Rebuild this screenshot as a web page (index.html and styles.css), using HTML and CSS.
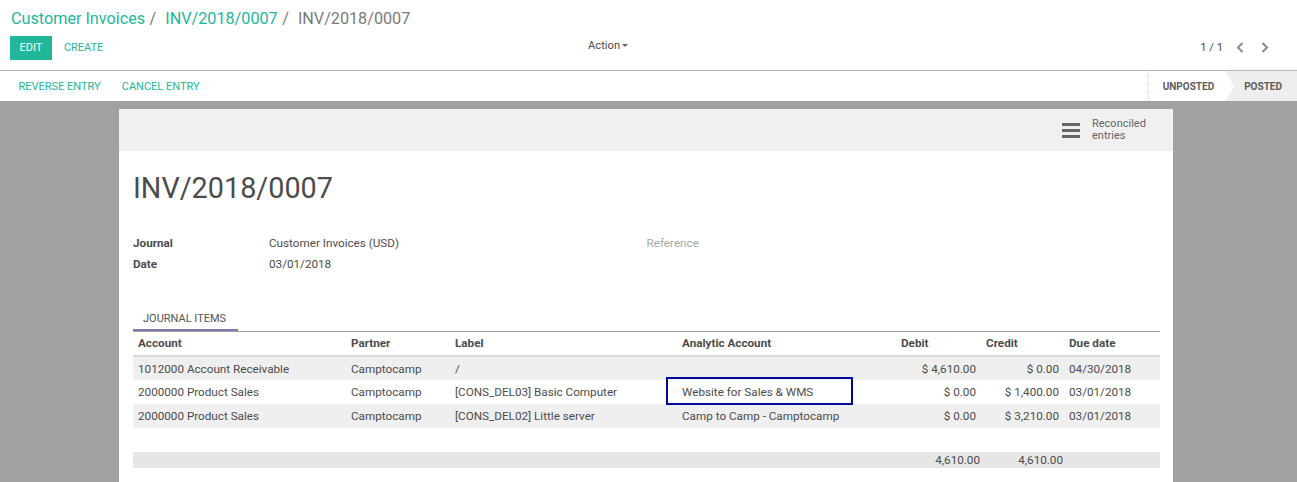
FILE: index.html
```html
<!DOCTYPE html>
<html>
<head>
<meta charset="utf-8">
<link rel="stylesheet" href="styles.css">
</head>
<body>
<div class="control-panel">
  <ol class="breadcrumb">
    <li class="crumb link">Customer Invoices</li>
    <li class="sep">/</li>
    <li class="crumb link">INV/2018/0007</li>
    <li class="sep">/</li>
    <li class="crumb active">INV/2018/0007</li>
  </ol>
  <div class="cp-row">
    <div class="cp-buttons">
      <button class="btn btn-primary">EDIT</button>
      <button class="btn btn-link">CREATE</button>
    </div>
    <div class="cp-sidebar">
      <span class="dropdown">Action<span class="caret"></span></span>
    </div>
    <div class="cp-pager">
      <span class="pager-value">1 / 1</span>
      <span class="pager-btn"><svg width="8" height="11" viewBox="0 0 8 11"><path d="M6.5 1 L2 5.5 L6.5 10" fill="none" stroke="#8a8a8a" stroke-width="2"/></svg></span>
      <span class="pager-btn"><svg width="8" height="11" viewBox="0 0 8 11"><path d="M1.5 1 L6 5.5 L1.5 10" fill="none" stroke="#8a8a8a" stroke-width="2"/></svg></span>
    </div>
  </div>
</div>

<div class="form-view">
  <div class="statusbar">
    <div class="status-actions">
      <button class="btn btn-link small">REVERSE ENTRY</button>
      <button class="btn btn-link small">CANCEL ENTRY</button>
    </div>
    <div class="status-steps">
      <span class="step">UNPOSTED</span>
      <span class="step current">POSTED</span>
    </div>
  </div>

  <div class="form-bg">
    <div class="sheet">
      <div class="button-box">
        <button class="stat-button">
          <span class="hamburger"><i></i><i></i><i></i></span>
          <span class="stat-text">Reconciled<br>entries</span>
        </button>
      </div>
      <div class="sheet-body">
        <h1 class="title">INV/2018/0007</h1>
        <div class="groups">
          <table class="group">
            <tr><td class="label">Journal</td><td class="value">Customer Invoices (USD)</td></tr>
            <tr><td class="label">Date</td><td class="value">03/01/2018</td></tr>
          </table>
          <table class="group">
            <tr><td class="label empty">Reference</td><td class="value"></td></tr>
          </table>
        </div>

        <div class="notebook">
          <ul class="tabs">
            <li class="tab active">JOURNAL ITEMS</li>
          </ul>
          <table class="list">
            <colgroup>
              <col class="c-account"><col class="c-partner"><col class="c-label"><col class="c-analytic"><col class="c-debit"><col class="c-credit"><col class="c-due">
            </colgroup>
            <thead>
              <tr><th>Account</th><th>Partner</th><th>Label</th><th>Analytic Account</th><th>Debit</th><th>Credit</th><th>Due date</th></tr>
            </thead>
            <tbody>
              <tr class="odd"><td>1012000 Account Receivable</td><td>Camptocamp</td><td>/</td><td></td><td class="num">$ 4,610.00</td><td class="num">$ 0.00</td><td>04/30/2018</td></tr>
              <tr><td>2000000 Product Sales</td><td>Camptocamp</td><td>[CONS_DEL03] Basic Computer</td><td class="marked">Website for Sales &amp; WMS<span class="highlight"></span></td><td class="num">$ 0.00</td><td class="num">$ 1,400.00</td><td>03/01/2018</td></tr>
              <tr class="odd"><td>2000000 Product Sales</td><td>Camptocamp</td><td>[CONS_DEL02] Little server</td><td>Camp to Camp - Camptocamp</td><td class="num">$ 0.00</td><td class="num">$ 3,210.00</td><td>03/01/2018</td></tr>
              <tr class="filler"><td></td><td></td><td></td><td></td><td></td><td></td><td></td></tr>
            </tbody>
            <tfoot>
              <tr><td></td><td></td><td></td><td></td><td class="num total">4,610.00</td><td class="num total">4,610.00</td><td></td></tr>
            </tfoot>
          </table>
        </div>
      </div>
    </div>
  </div>
</div>
</body>
</html>
```

FILE: styles.css
```css
* { box-sizing: border-box; }
html, body {
  margin: 0;
  padding: 0;
  height: 482px;
  overflow: hidden;
  background: #ffffff;
  font-family: Roboto, "Liberation Sans", sans-serif;
  color: #4c4c4c;
  font-size: 11.7px;
}
button {
  font-family: inherit;
  border: 0;
  background: none;
  cursor: pointer;
  margin: 0;
}

/* control panel */
.control-panel {
  height: 71px;
  border-bottom: 1px solid #b9b9b9;
  padding-top: 8px;
}
.breadcrumb {
  list-style: none;
  margin: 0;
  padding: 0 0 0 11px;
  display: flex;
  align-items: center;
  height: 22px;
  font-size: 16.2px;
  line-height: 22px;
}
.breadcrumb .crumb.link { color: #21b799; }
.breadcrumb .crumb.active { color: #7a7a7a; }
.breadcrumb .sep { color: #7a7a7a; padding: 0 9px 0 4.5px; }
.cp-row {
  display: grid;
  grid-template-columns: 578px auto 1fr;
  align-items: center;
  margin-top: 6px;
  height: 24px;
}
.cp-buttons { display: flex; align-items: center; padding-left: 10px; }
.btn {
  height: 24px;
  font-size: 11px;
  line-height: 24px;
  padding: 0 12px;
}
.btn-primary {
  background: #21b799;
  color: #fff;
  padding: 0 9.5px;
}
.btn-link { color: #21b799; }
.cp-sidebar {
  padding-left: 10px;
  padding-bottom: 6px;
  font-size: 11.2px;
  color: #4c4c4c;
}
.caret {
  display: inline-block;
  margin-left: 2px;
  vertical-align: middle;
  border-top: 3.5px solid #666;
  border-left: 3.5px solid transparent;
  border-right: 3.5px solid transparent;
}
.cp-pager {
  justify-self: end;
  display: flex;
  align-items: center;
  padding-right: 20px;
  padding-bottom: 2px;
  font-size: 11.2px;
}
.pager-value { margin-right: 4px; }
.pager-btn { display: inline-flex; width: 25px; justify-content: center; }

/* status bar */
.statusbar {
  height: 30px;
  display: flex;
  justify-content: space-between;
  align-items: stretch;
}
.status-actions { display: flex; align-items: center; padding-left: 8px; padding-top: 1px; }
.btn.small { padding: 0 10.5px; font-size: 11px; }
.status-steps {
  display: flex;
  align-items: stretch;
  border-left: 1px dotted #d4d0e6;
}
.step {
  display: flex;
  align-items: center;
  font-size: 10px;
  font-weight: bold;
  color: #5c5c5c;
  padding-top: 1px;
}
.step:first-child { padding-left: 14px; padding-right: 11px; }
.step.current {
  background: #eeeeef;
  padding-left: 19px;
  padding-right: 15px;
  clip-path: polygon(0 0, 100% 0, 100% 100%, 0 100%, 9px 50%);
}

/* form background and sheet */
.form-bg {
  background: #a1a1a1;
  height: 381px;
  padding: 8px 0 0 119px;
}
.sheet {
  width: 1054px;
  height: 400px;
  background: #fff;
}
.button-box {
  height: 42px;
  background: #f0f0f1;
  display: flex;
  justify-content: flex-end;
  align-items: center;
  padding-right: 22px;
}
.stat-button {
  display: flex;
  align-items: center;
  padding: 0;
  color: #666;
}
.hamburger {
  display: flex;
  flex-direction: column;
  gap: 3px;
  width: 18px;
  margin-right: 12px;
}
.hamburger i {
  display: block;
  height: 3px;
  background: #666;
}
.stat-text {
  text-align: left;
  font-size: 11px;
  line-height: 12px;
  width: 59px;
}
.sheet-body { padding: 0 13px 0 14px; }
.title {
  margin: 20px 0 0 0;
  font-size: 28.8px;
  line-height: 35px;
  font-weight: normal;
  color: #4c4c4c;
}
.groups {
  display: flex;
  align-items: flex-start;
  margin-top: 26px;
}
.group {
  width: 50%;
  border-collapse: collapse;
}
.group td { height: 21px; padding: 0; vertical-align: middle; }
.group .label { width: 136px; font-weight: bold; }
.group .label.empty { font-weight: normal; color: #a8a8a8; }

/* notebook */
.notebook { margin-top: 34px; }
.tabs {
  list-style: none;
  margin: 0;
  padding: 0;
  display: flex;
  border-bottom: 1px solid #9d9d9d;
  height: 24px;
}
.tab {
  font-size: 11px;
  padding: 0 12px 0 10px;
  line-height: 21px;
  color: #555;
}
.tab.active { border-bottom: 2px solid #7c7bad; }

.list {
  width: 100%;
  table-layout: fixed;
  border-collapse: collapse;
}
.c-account { width: 213px; }
.c-partner { width: 104px; }
.c-label { width: 227px; }
.c-analytic { width: 219px; }
.c-debit { width: 85px; }
.c-credit { width: 83px; }
.c-due { width: 96px; }
.list th {
  text-align: left;
  font-weight: bold;
  height: 24px;
  padding: 0 5px 2px 5px;
  border-bottom: 2px solid #d9d9d9;
}
.list td {
  height: 24px;
  padding: 0 5px;
  white-space: nowrap;
}
.list tr.odd td { background: #efeff0; }
.list .num { text-align: right; }
.list td.marked { position: relative; }
.highlight {
  position: absolute;
  left: -11px;
  top: -3px;
  width: 187px;
  height: 28px;
  border: 2px solid #00089a;
}
.list tfoot td {
  height: 16px;
  background: #e6e6e7;
  padding: 0;
}
.list tfoot td.total { padding-right: 1px; }
```
